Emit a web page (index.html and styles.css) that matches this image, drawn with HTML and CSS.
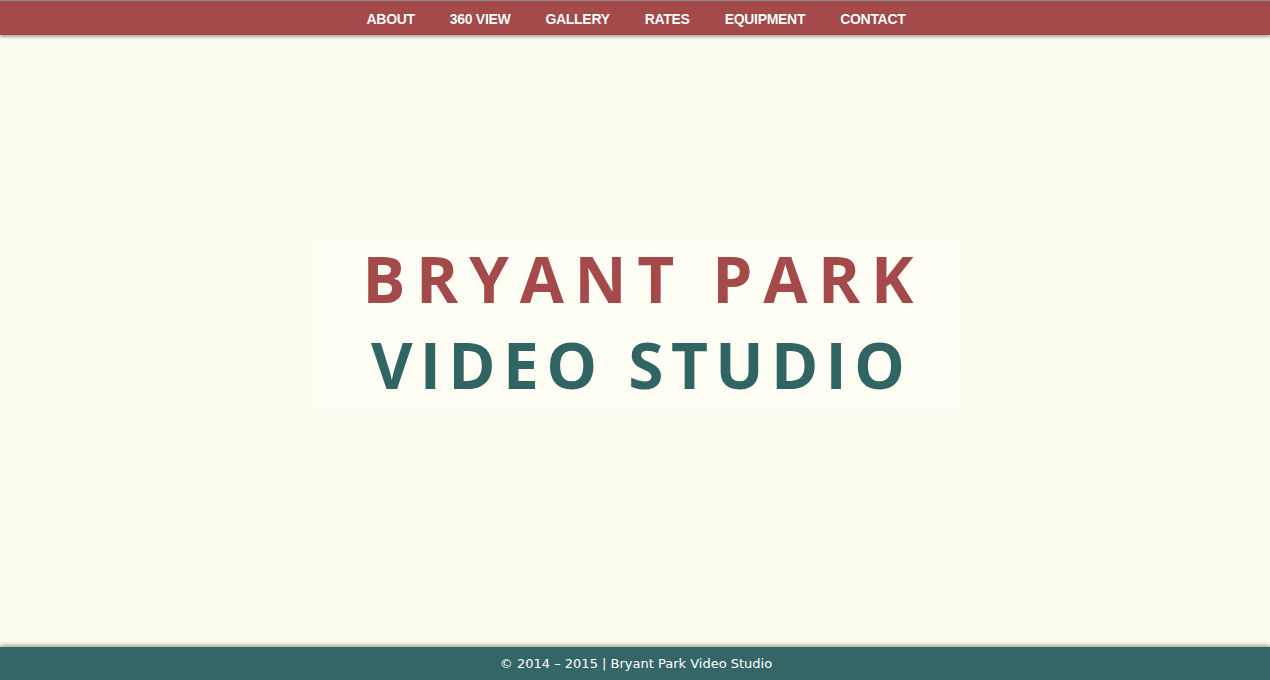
FILE: index.html
```html
<!DOCTYPE html>
<html>
<head>
<meta charset="utf-8">
<title>Bryant Park Video Studio</title>
<link rel="stylesheet" href="styles.css">
</head>
<body>
<div class="page">
  <header class="topbar">
    <nav class="nav">
      <a href="#">ABOUT</a>
      <a href="#">360 VIEW</a>
      <a href="#">GALLERY</a>
      <a href="#">RATES</a>
      <a href="#">EQUIPMENT</a>
      <a href="#">CONTACT</a>
    </nav>
  </header>
  <main class="hero">
    <div class="title-box">
      <div class="title-line red">BRYANT PARK</div>
      <div class="title-line teal">VIDEO STUDIO</div>
    </div>
  </main>
  <footer class="footer">© 2014 – 2015 | Bryant Park Video Studio</footer>
</div>
</body>
</html>
```
FILE: styles.css
```css
html, body {
  margin: 0;
  padding: 0;
  background: #fdfdf1;
}
.page {
  display: flex;
  flex-direction: column;
  height: 680px;
  overflow: hidden;
}
.topbar {
  flex: 0 0 auto;
  height: 34px;
  background: #a44a4a;
  border-top: 1px solid #8c8c8c;
  box-shadow: 0 2px 3px rgba(0,0,0,0.35);
  position: relative;
  z-index: 2;
  display: flex;
  justify-content: center;
  align-items: center;
}
.nav {
  display: flex;
  gap: 35px;
  margin-left: 2px;
  padding-top: 2px;
}
.nav a {
  font-family: "Liberation Sans", Arial, sans-serif;
  font-weight: bold;
  font-size: 14px;
  color: #fff;
  text-decoration: none;
  letter-spacing: -0.3px;
  text-shadow: 0 0 1px rgba(0,0,0,0.3);
}
.hero {
  flex: 1;
  display: flex;
  justify-content: center;
  align-items: center;
  padding-bottom: 38px;
}
.title-box {
  width: 640px;
  height: 165px;
  background: #fefef4;
  display: flex;
  flex-direction: column;
  align-items: center;
  justify-content: center;
  gap: 16px;
  margin-left: 6px;
}
.title-line {
  font-family: "Open Sans", sans-serif;
  font-weight: 700;
  font-size: 64px;
  line-height: 70px;
}
.red {
  color: #a54a4a;
  letter-spacing: 10.7px;
  margin-right: -10.7px;
}
.teal {
  color: #316563;
  letter-spacing: 7.3px;
  margin-right: -7.3px;
}
.footer {
  flex: 0 0 auto;
  height: 33px;
  background: #336665;
  box-shadow: 0 -2px 4px rgba(0,0,0,0.35);
  position: relative;
  z-index: 2;
  color: #fff;
  font-family: "DejaVu Sans", Verdana, sans-serif;
  font-size: 13px;
  display: flex;
  justify-content: center;
  align-items: center;
  padding-left: 2px;
}
```
